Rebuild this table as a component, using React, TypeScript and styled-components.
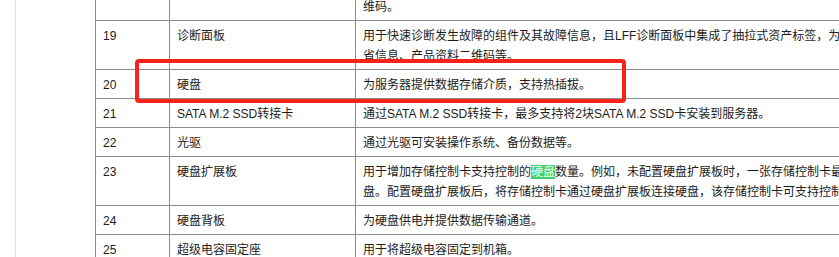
import React from "react";
import styled, { createGlobalStyle } from "styled-components";

const GlobalStyle = createGlobalStyle`
  html, body {
    margin: 0;
    padding: 0;
    background: #ffffff;
    overflow: hidden;
  }
`;

const Page = styled.div`
  display: flex;
  width: 839px;
  height: 257px;
  overflow: hidden;
  font-family: "Liberation Sans", "Noto Sans CJK SC", sans-serif;
  font-size: 12px;
  color: #1c1c1c;
`;

// thin rule of the side panel on the left
const SideRule = styled.div`
  width: 15px;
  flex: none;
  border-right: 1px solid #e2e2e2;
`;

const Content = styled.div`
  position: relative;
  flex: 1;
  padding-left: 79px;
`;

const Table = styled.table`
  border-collapse: collapse;
  table-layout: fixed;
  width: 1100px;
  margin-top: -29px;
`;

const Cell = styled.td<{ $w?: number }>`
  width: ${(p) => (p.$w ? `${p.$w}px` : "auto")};
  border: 1px solid #8c8c8c;
  padding: 5px 7px 3px;
  line-height: 20px;
  vertical-align: top;
  white-space: nowrap;
  overflow: hidden;
`;

const Mark = styled.span`
  display: inline-block;
  line-height: 14px;
  background: #3fd06e;
  color: #eafff1;
`;

// red annotation frame drawn over row 20
const Highlight = styled.div`
  position: absolute;
  left: 119px;
  top: 59px;
  width: 483px;
  height: 36px;
  border: 4px solid #f7221a;
  border-radius: 4px;
  pointer-events: none;
`;

interface Row {
  no: string;
  name: string;
  desc: React.ReactNode;
}

const rows: Row[] = [
  {
    no: "18",
    name: "",
    desc: (
      <>
        支持查看产品序列号、缺省信息、产品资料二
        <br />
        维码。
      </>
    ),
  },
  {
    no: "19",
    name: "诊断面板",
    desc: (
      <>
        用于快速诊断发生故障的组件及其故障信息，且LFF诊断面板中集成了抽拉式资产标签，为资产管理提供缺
        <br />
        省信息、产品资料二维码等。
      </>
    ),
  },
  { no: "20", name: "硬盘", desc: "为服务器提供数据存储介质，支持热插拔。" },
  {
    no: "21",
    name: "SATA M.2 SSD转接卡",
    desc: "通过SATA M.2 SSD转接卡，最多支持将2块SATA M.2 SSD卡安装到服务器。",
  },
  { no: "22", name: "光驱", desc: "通过光驱可安装操作系统、备份数据等。" },
  {
    no: "23",
    name: "硬盘扩展板",
    desc: (
      <>
        用于增加存储控制卡支持控制的<Mark>硬盘</Mark>
        数量。例如，未配置硬盘扩展板时，一张存储控制卡最多支持控制8块硬
        <br />
        盘。配置硬盘扩展板后，将存储控制卡通过硬盘扩展板连接硬盘，该存储控制卡可支持控制更多硬盘。
      </>
    ),
  },
  { no: "24", name: "硬盘背板", desc: "为硬盘供电并提供数据传输通道。" },
  { no: "25", name: "超级电容固定座", desc: "用于将超级电容固定到机箱。" },
];

export default function App() {
  return (
    <>
      <GlobalStyle />
      <Page>
        <SideRule />
        <Content>
          <Table>
            <tbody>
              {rows.map((r) => (
                <tr key={r.no}>
                  <Cell $w={59}>{r.name ? r.no : ""}</Cell>
                  <Cell $w={171}>{r.name}</Cell>
                  <Cell>{r.desc}</Cell>
                </tr>
              ))}
            </tbody>
          </Table>
          <Highlight />
        </Content>
      </Page>
    </>
  );
}
